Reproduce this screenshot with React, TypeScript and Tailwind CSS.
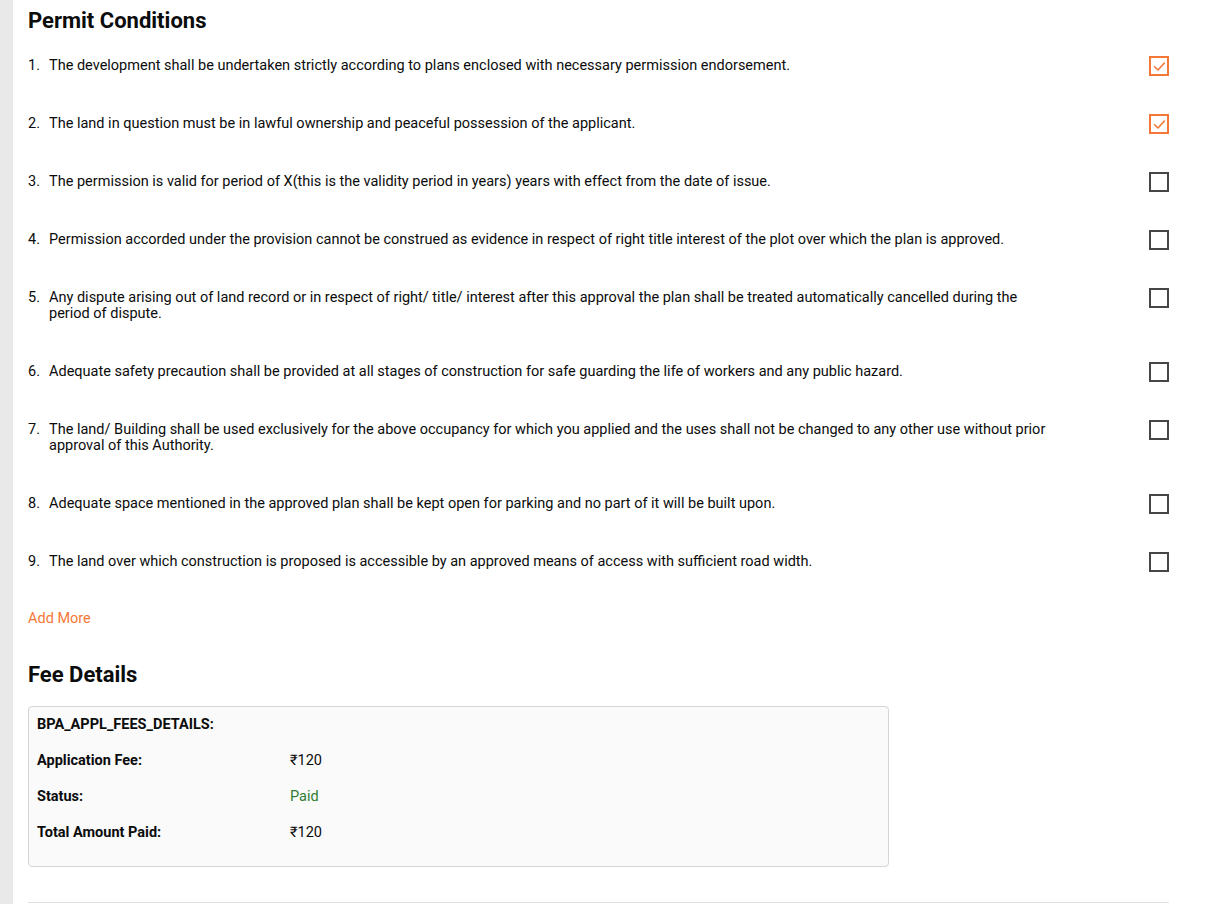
const conditions = [
  { text: 'The development shall be undertaken strictly according to plans enclosed with necessary permission endorsement.', checked: true },
  { text: 'The land in question must be in lawful ownership and peaceful possession of the applicant.', checked: true },
  { text: 'The permission is valid for period of X(this is the validity period in years) years with effect from the date of issue.', checked: false },
  { text: 'Permission accorded under the provision cannot be construed as evidence in respect of right title interest of the plot over which the plan is approved.', checked: false },
  { text: 'Any dispute arising out of land record or in respect of right/ title/ interest after this approval the plan shall be treated automatically cancelled during the period of dispute.', checked: false },
  { text: 'Adequate safety precaution shall be provided at all stages of construction for safe guarding the life of workers and any public hazard.', checked: false },
  { text: 'The land/ Building shall be used exclusively for the above occupancy for which you applied and the uses shall not be changed to any other use without prior approval of this Authority.', checked: false },
  { text: 'Adequate space mentioned in the approved plan shall be kept open for parking and no part of it will be built upon.', checked: false },
  { text: 'The land over which construction is proposed is accessible by an approved means of access with sufficient road width.', checked: false },
];

const fees = [
  { label: 'Application Fee:', value: '₹120', color: 'text-[#0b0c0c]' },
  { label: 'Status:', value: 'Paid', color: 'text-[#2e7d32]' },
  { label: 'Total Amount Paid:', value: '₹120', color: 'text-[#0b0c0c]' },
];

export default function App() {
  return (
    <div className="min-h-screen flex bg-white text-[#0b0c0c]" style={{ fontFamily: 'Roboto, "Liberation Sans", sans-serif' }}>
      {/* left strip */}
      <div className="w-[13px] shrink-0 bg-[#e9e9e9]" />

      <main className="flex-1 pl-[15px] pr-[39px] pt-[8px]">
        <h2 className="text-[22px] font-bold leading-[26px]">Permit Conditions</h2>

        <ol className="mt-[22px]">
          {conditions.map((c, i) => (
            <li key={i} className="flex items-start justify-between pb-[38px]">
              <div className="flex text-[14.5px] leading-[16px] w-[1025px] py-[2px]">
                <span className="w-[21px] shrink-0">{i + 1}.</span>
                <span>{c.text}</span>
              </div>
              {c.checked ? (
                <span className="w-[20px] h-[20px] shrink-0 border-2 border-[#f47738] flex items-center justify-center">
                  <svg width="13" height="13" viewBox="0 0 12 12" fill="none">
                    <path d="M1.5 6.2 L4.6 9.2 L10.5 2.8" stroke="#f47738" strokeWidth="1.5" strokeLinecap="round" strokeLinejoin="round" />
                  </svg>
                </span>
              ) : (
                <span className="w-[20px] h-[20px] shrink-0 border-2 border-[#464646]" />
              )}
            </li>
          ))}
        </ol>

        <button className="block mt-[1px] text-[14.5px] text-[#f47738] leading-[16px]">Add More</button>

        <h2 className="text-[22px] font-bold leading-[26px] mt-[35px]">Fee Details</h2>

        <div className="mt-[18px] w-[861px] h-[161px] bg-[#fafafa] border border-[#d6d5d4] rounded-[4px] px-[8px] pt-[10px]">
          <p className="text-[14.5px] font-bold leading-[16px]">BPA_APPL_FEES_DETAILS:</p>
          <div className="mt-[20px] flex flex-col gap-[20px]">
            {fees.map((f) => (
              <div key={f.label} className="flex text-[14.5px] leading-[16px]">
                <span className="w-[253px] font-bold">{f.label}</span>
                <span className={f.color}>{f.value}</span>
              </div>
            ))}
          </div>
        </div>

        <div className="mt-[35px] border-t border-[#e0e0e0]" />
      </main>
    </div>
  );
}
